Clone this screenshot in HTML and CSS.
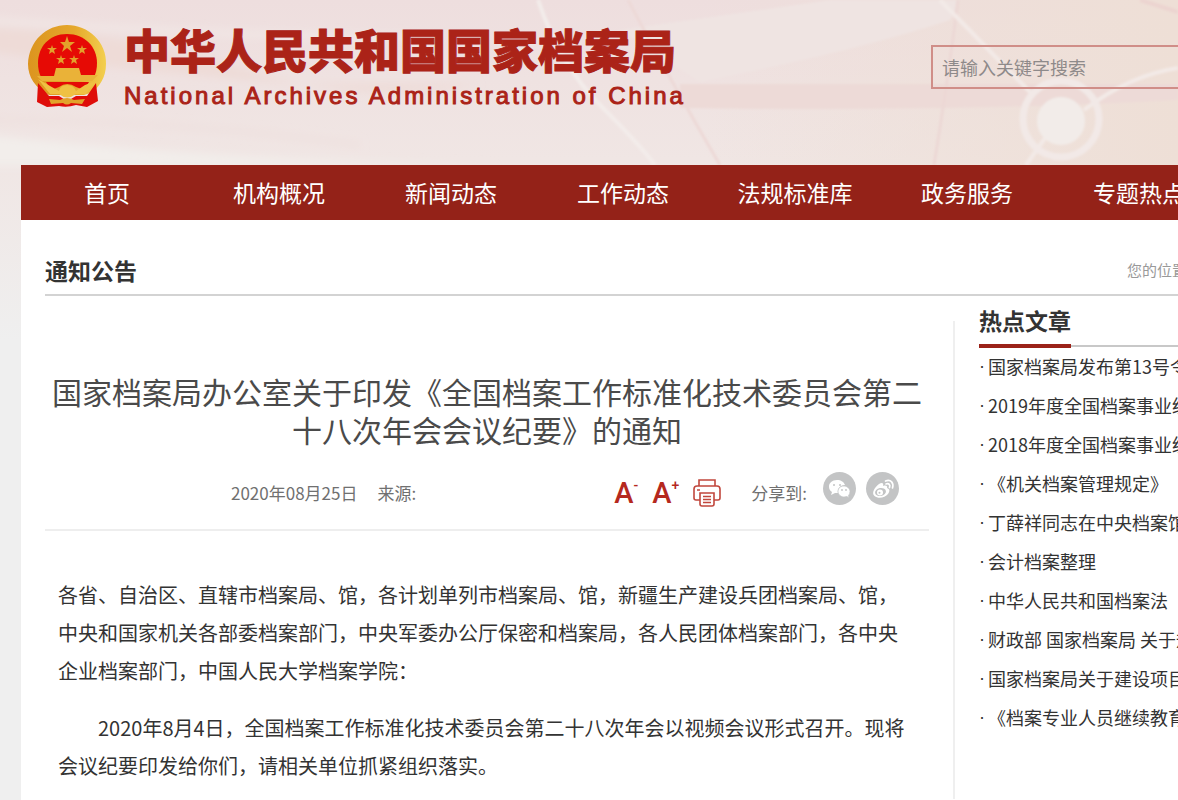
FILE: index.html
```html
<!DOCTYPE html>
<html lang="zh-CN">
<head>
<meta charset="utf-8">
<title>国家档案局</title>
<link rel="stylesheet" href="styles.css">
</head>
<body>
<svg class="backdrop" viewBox="0 0 1178 400" preserveAspectRatio="xMidYMin slice" aria-hidden="true">
  <defs>
    <linearGradient id="base" x1="0" y1="0" x2="0" y2="1">
      <stop offset="0" stop-color="#eedede"/><stop offset=".4" stop-color="#f0e6e4"/><stop offset=".85" stop-color="#efefef"/>
    </linearGradient>
    <linearGradient id="warm" x1="0" y1="0" x2="1" y2="0">
      <stop offset=".6" stop-color="#eedfd6" stop-opacity="0"/><stop offset="1" stop-color="#eedfd6"/>
    </linearGradient>
    <filter id="soft"><feGaussianBlur stdDeviation="1"/></filter>
    <filter id="softer" x="-10%" width="120%"><feGaussianBlur stdDeviation="4"/></filter>
  </defs>
  <rect width="1178" height="400" fill="url(#base)"/>
  <rect width="1178" height="170" fill="url(#warm)"/>
  <g filter="url(#softer)">
    <path d="M-20 28Q120 30 240 68T480 84L300 84Q120 70 -20 50Z" fill="#eedbd7"/>
    <path d="M-20 20Q200 36 440 38" stroke="#f2e9e7" stroke-width="5" fill="none"/>
    <path d="M-20 134Q200 160 500 166L-20 166Z" fill="#f2eeeb"/>
    <path d="M-20 120Q180 120 360 145" stroke="#eee0de" stroke-width="5" fill="none"/>
  </g>
  <g filter="url(#soft)">
    <path d="M620 30L830 0H960L950 20Q860 50 700 82Z" fill="#efe4e2"/>
    <path d="M680 84H1178V100Q950 112 680 108Z" fill="#eddad7"/>
    <path d="M538 0Q560 65 600 105T655 165" stroke="#f3ecea" stroke-width="4" fill="none"/>
    <path d="M628 0Q670 80 720 165" stroke="#edd9d7" stroke-width="3" fill="none"/>
    <path d="M958 0Q948 80 934 165" stroke="#ecd8d5" stroke-width="3" fill="none"/>
    <path d="M940 0L1030 92M1048 134L1026 165M1084 110Q1130 75 1178 68" stroke="#f3eae7" stroke-width="4" fill="none"/>
    <path d="M1140 0L1178 12" stroke="#ecd4d0" stroke-width="4"/>
    <circle cx="1061" cy="119" r="38" fill="none" stroke="#f2e9e7" stroke-width="7"/>
    <circle cx="1061" cy="121" r="24" fill="#f2ece9"/>
  </g>
</svg>

<header class="masthead">
  <a class="brand" href="#">
    <svg class="emblem" viewBox="0 0 79 84" role="img" aria-label="国徽">
      <defs><linearGradient id="gold"><stop offset="0" stop-color="#dc941f"/><stop offset=".6" stop-color="#e5a82c"/><stop offset="1" stop-color="#f3cf4e"/></linearGradient></defs>
      <path d="M39 0C60 0 79 17 78 39C78 53 71 61 65 67L56 70H21C7 63 0 52 0 39C1 16 18 0 39 0Z" fill="url(#gold)"/>
      <path d="M39 9C57 9 69 22 69 38Q69 46 66 52H13Q10 46 10 38C10 22 21 9 39 9Z" fill="#e60a05"/>
      <g fill="#e3a12b">
        <path d="M39 11L41 17H47L42 21 44 27 39 23 34 27 36 21 32 17H37Z"/>
        <path d="M24 20l1 3h4l-3 2 1 4-3-2-3 2 1-4-3-2h4ZM54 20l1 3h4l-3 2 1 4-3-2-3 2 1-4-3-2h4ZM33 30l1 3h4l-3 2 1 4-3-2-3 2 1-4-3-2h4ZM46 30l1 3h4l-3 2 1 4-3-2-3 2 1-4-3-2h4Z"/>
      </g>
      <path d="M28 43H51L53 50H70L64 56H14L9 51H26Z" fill="#eab238"/>
      <path d="M18 57H61L56 65 48 62Q39 56 31 62L23 65Z" fill="#e50a06"/>
      <path d="M10 54L22 69H31Q39 76 48 69H58L68 56 57 60 48 66Q46 60 39 60T31 66L22 61Z" fill="#efc143"/>
      <path d="M10 58L21 71H31Q39 78 48 71H59L68 58 70 76 59 82 48 80Q39 83 31 81L19 82 9 77Z" fill="#df0d09"/>
      <path d="M21 74L32 75Q39 71 46 75L57 74 54 79 43 78Q39 81 35 78L23 79Z" fill="#e2a22a"/>
    </svg>
    <span class="brand-text">
      <span class="brand-cn">中华人民共和国国家档案局</span>
      <span class="brand-en">National Archives Administration of China</span>
    </span>
  </a>
  <form class="search"><input type="search" aria-label="请输入关键字搜索" placeholder="请输入关键字搜索"></form>
</header>

<div class="page">
  <nav class="menu">
    <a href="#">首页</a><a href="#">机构概况</a><a href="#">新闻动态</a><a href="#">工作动态</a><a href="#">法规标准库</a><a href="#">政务服务</a><a href="#">专题热点</a>
  </nav>
  <main class="content">
    <div class="section-head">
      <h2>通知公告</h2>
      <span class="crumbs">您的位置</span>
    </div>
    <div class="columns">
      <article class="article">
        <h1>国家档案局办公室关于印发《全国档案工作标准化技术委员会第二十八次年会会议纪要》的通知</h1>
        <div class="meta">
          <div class="source"><time datetime="2020-08-25">2020年08月25日</time><span>来源:</span></div>
          <div class="tools">
            <button class="size" type="button" aria-label="缩小字体">A<sup>-</sup></button>
            <button class="size" type="button" aria-label="放大字体">A<sup>+</sup></button>
            <button class="print" type="button" aria-label="打印">
              <svg width="28" height="28" viewBox="0 0 28 28" fill="none" stroke="#c1473d" stroke-width="1.6">
                <path d="M6 7V1H22V7M7 21H3Q1 21 1 19V10Q1 7 4 7H24Q27 7 27 10V19Q27 21 25 21H21"/>
                <path d="M7 14H21V25Q21 27 19 27H9Q7 27 7 25ZM10 17.500H18M10 20.500H18M10 23.500H18M4 11H7"/>
              </svg>
            </button>
          </div>
          <div class="share">
            <span>分享到:</span>
            <a href="#" aria-label="微信"><svg width="33" height="33" viewBox="0 0 33 33">
              <circle cx="16.500" cy="16.500" r="16.500" fill="#c3c4c5"/>
              <path d="M14 8C9 8 6 11 6 14.500Q6 18 9 20L8 23 12 21Q14 21 15 21C14 16 18 13 22 13C21 10 18 8 14 8Z" fill="#fff"/>
              <path d="M21 14C17 14 15 16.500 15 19.500S18 25 21 25L24 24.500 26 26 25.500 23.500Q27 22 27 19.500C27 16.500 24 14 21 14Z" fill="#fff" stroke="#c3c4c5" stroke-width=".7"/>
              <g fill="#c3c4c5"><circle cx="11" cy="13" r="1"/><circle cx="17" cy="13" r="1"/><circle cx="19" cy="18" r=".9"/><circle cx="23" cy="18" r=".9"/></g>
            </svg></a>
            <a href="#" aria-label="微博"><svg width="33" height="33" viewBox="0 0 33 33">
              <circle cx="16.500" cy="16.500" r="16.500" fill="#c3c4c5"/>
              <path d="M13 12C16 10 18 11 17 14C20 13 22 14 21 16C24 17 24 19 22 22C19 26 12 27 8.500 24C5 21 9 15 13 12Z" fill="#fff"/>
              <ellipse cx="14.500" cy="20" rx="5.500" ry="4" fill="#c3c4c5" transform="rotate(-10 14.500 20)"/>
              <circle cx="14" cy="20.500" r="3" fill="#fff"/><circle cx="13.500" cy="20.800" r="1" fill="#c3c4c5"/>
              <path d="M19.500 9C25 7 28 11 26.500 16M20 12C23 11 24.500 13 23.500 15.500" fill="none" stroke="#fff" stroke-width="1.700" stroke-linecap="round"/>
            </svg></a>
          </div>
        </div>
        <div class="body">
          <p>各省、自治区、直辖市档案局、馆，各计划单列市档案局、馆，新疆生产建设兵团档案局、馆，中央和国家机关各部委档案部门，中央军委办公厅保密和档案局，各人民团体档案部门，各中央企业档案部门，中国人民大学档案学院：</p>
          <p class="indent">2020年8月4日，全国档案工作标准化技术委员会第二十八次年会以视频会议形式召开。现将会议纪要印发给你们，请相关单位抓紧组织落实。</p>
        </div>
      </article>
      <aside class="hot">
        <div class="hot-head"><h2>热点文章</h2></div>
        <ul>
          <li><a href="#">国家档案局发布第13号令</a></li>
          <li><a href="#">2019年度全国档案事业统</a></li>
          <li><a href="#">2018年度全国档案事业统</a></li>
          <li><a href="#">《机关档案管理规定》（</a></li>
          <li><a href="#">丁薛祥同志在中央档案馆</a></li>
          <li><a href="#">会计档案整理</a></li>
          <li><a href="#">中华人民共和国档案法</a></li>
          <li><a href="#">财政部 国家档案局 关于规</a></li>
          <li><a href="#">国家档案局关于建设项目</a></li>
          <li><a href="#">《档案专业人员继续教育</a></li>
        </ul>
      </aside>
    </div>
  </main>
</div>
</body>
</html>
```

FILE: styles.css
```css
* { box-sizing: border-box; }
html { background: #efefef; }
body {
  margin: 0;
  position: relative;
  overflow-x: hidden;
  font-family: "Noto Sans CJK SC", sans-serif;
  color: #333;
  text-spacing-trim: space-all;
}
a { color: inherit; text-decoration: none; }
h1, h2, p, ul { margin: 0; padding: 0; }
ul { list-style: none; }
button { border: 0; padding: 0; background: none; }

.backdrop { position: absolute; z-index: -1; top: 0; left: 0; width: 100%; height: 400px; }

.masthead {
  display: flex;
  justify-content: space-between;
  align-items: flex-start;
  height: 165px;
  padding: 25px 0 0 28px;
}
.brand { display: flex; gap: 17px; color: #ab2318; }
.emblem { width: 79px; height: 84px; }
.brand-text { display: flex; flex-direction: column; gap: 10px; }
.brand-cn {
  font-size: 46px;
  line-height: 46px;
  font-weight: 900;
  white-space: nowrap;
  -webkit-text-stroke: 1px #ab2318;
}
.brand-en {
  font-family: "Liberation Sans", sans-serif;
  font-size: 24px;
  line-height: 30px;
  letter-spacing: 3px;
  white-space: nowrap;
  -webkit-text-stroke: 1px #ab2318;
}
.search { flex: 0 0 247px; padding-top: 20px; }
.search input {
  width: 100%;
  height: 44px;
  padding: 0 9px;
  border: 2px solid #d08e88;
  border-right: 0;
  border-radius: 0;
  background: transparent;
  font: 18px "Noto Sans CJK SC", sans-serif;
}
.search input::placeholder { color: #8e8a8a; }

.page { margin-left: 21px; background: #fff; }
.menu { display: flex; height: 55px; overflow: hidden; background: #942218; }
.menu a {
  flex: 0 0 172px;
  text-align: center;
  color: #fff;
  font-size: 23px;
  line-height: 55px;
}

.content { padding-left: 24px; min-height: 580px; }
.section-head {
  display: flex;
  justify-content: space-between;
  padding: 35px 0 9px;
  border-bottom: 2px solid #d3d3d3;
  line-height: 30px;
}
.section-head h2 { font-size: 23px; }
.crumbs { flex: 0 0 51px; overflow: hidden; white-space: nowrap; font-size: 15px; color: #999; }

.columns { display: flex; gap: 24px; }
.article { flex: 1; min-width: 0; padding-top: 76px; }
.article h1 { font-size: 30px; line-height: 38px; font-weight: 400; text-align: center; color: #4a4a4a; }
.meta {
  display: flex;
  align-items: center;
  padding: 24px 30px 16px 186px;
  border-bottom: 2px solid #eee;
  font-size: 17px;
  line-height: 40px;
  color: #707070;
}
.source { display: flex; gap: 20px; }
.tools { display: flex; align-items: center; gap: 14px; margin-left: auto; }
.size {
  display: flex;
  align-items: center;
  font: 500 29px/30px Roboto, sans-serif;
  color: #b5281e;
}
.size sup { align-self: flex-start; font-size: 14px; line-height: 14px; }
.print { height: 28px; }
.share { display: flex; align-items: center; gap: 10px; margin-left: 30px; }
.share span { margin-right: 6px; }
.share a { height: 33px; margin-bottom: 8px; }
.share svg, .print svg { display: block; }

.body { padding: 45px 14px 14px 13px; font-size: 20px; line-height: 38px; }
.body p + p { margin-top: 19px; }
.indent { text-indent: 2em; }

.hot { position: relative; flex: 0 0 225px; padding: 7px 0 0 26px; overflow: hidden; }
.hot::before { content: ""; position: absolute; left: 0; top: 25px; bottom: 0; border-left: 2px solid #efefef; }
.hot-head { display: flex; border-bottom: 2px solid #c8c8c8; }
.hot-head h2 {
  margin-bottom: -3px;
  padding-bottom: 7px;
  border-bottom: 4px solid #9b2219;
  font-size: 23px;
  line-height: 34px;
}
.hot li { display: flex; font-size: 18px; line-height: 39px; white-space: nowrap; }
.hot li::before { content: "·"; flex: 0 0 9px; font-family: "Liberation Sans", sans-serif; }
```
